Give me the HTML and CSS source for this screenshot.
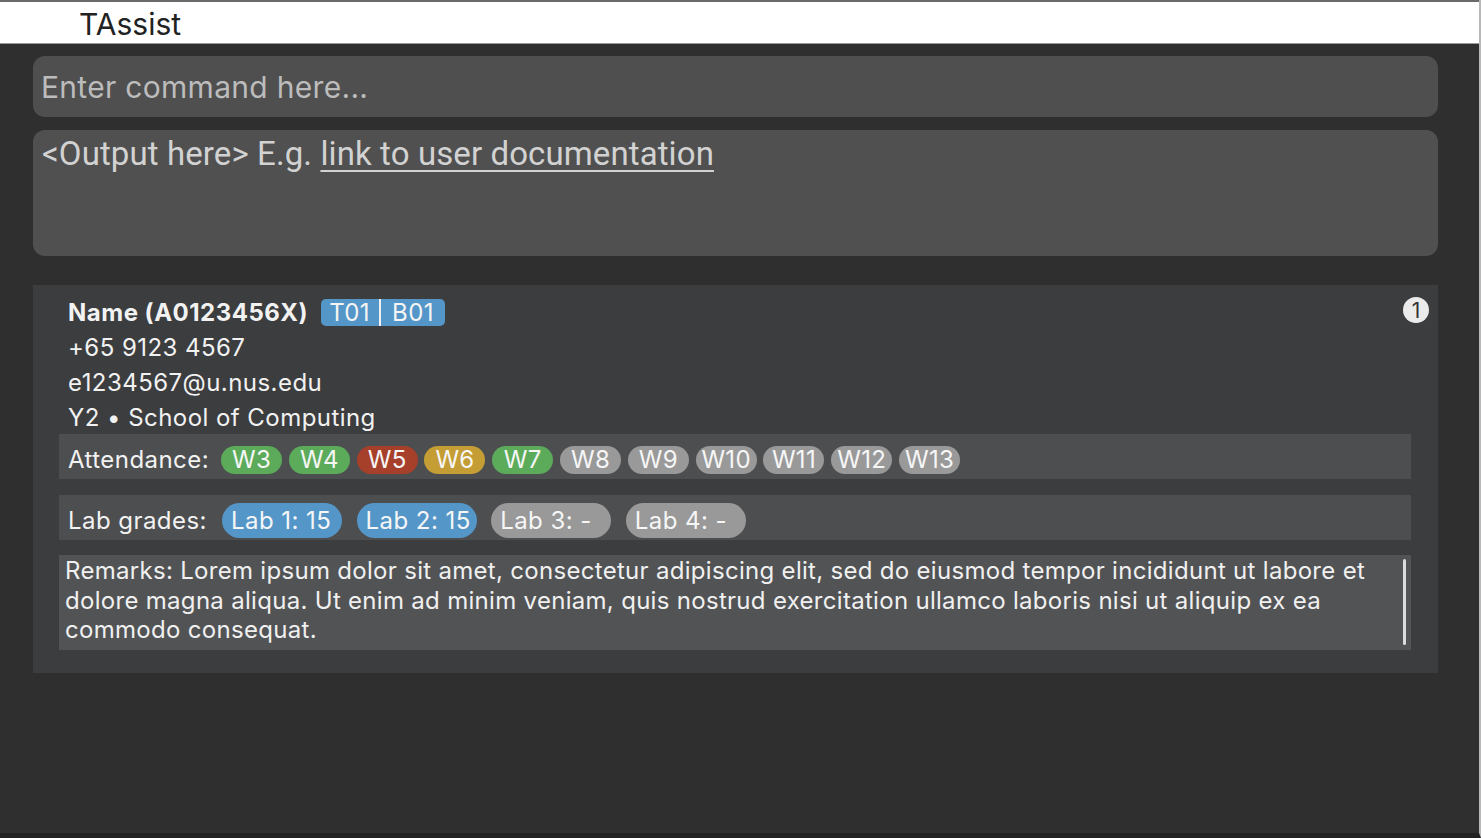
FILE: index.html
```html
<!DOCTYPE html>
<html lang="en">
<head>
<meta charset="utf-8">
<title>TAssist</title>
<link rel="stylesheet" href="styles.css">
</head>
<body>
<div class="window">
  <header class="titlebar"><span class="app-name">TAssist</span></header>
  <main class="content">
    <div class="command">Enter command here...</div>
    <div class="output"><span class="output-text">&lt;Output here&gt; E.g. <span class="link">link to user documentation</span></span></div>
    <section class="card">
      <span class="index">1</span>
      <div class="info">
        <div class="line name-line"><span class="name">Name (A0123456X)</span><span class="group"><span>T01</span><span class="divider"></span><span>B01</span></span></div>
        <div class="line">+65 9123 4567</div>
        <div class="line">e1234567@u.nus.edu</div>
        <div class="line">Y2 • School of Computing</div>
      </div>
      <div class="row attendance">
        <span class="label">Attendance:</span>
        <div class="chips">
          <span class="week present">W3</span>
          <span class="week present">W4</span>
          <span class="week absent">W5</span>
          <span class="week excused">W6</span>
          <span class="week present">W7</span>
          <span class="week pending">W8</span>
          <span class="week pending">W9</span>
          <span class="week pending">W10</span>
          <span class="week pending">W11</span>
          <span class="week pending">W12</span>
          <span class="week pending">W13</span>
        </div>
      </div>
      <div class="row labs">
        <span class="label">Lab grades:</span>
        <div class="lab-chips">
          <span class="lab graded">Lab 1: 15</span>
          <span class="lab graded">Lab 2: 15</span>
          <span class="lab ungraded">Lab 3: -</span>
          <span class="lab ungraded">Lab 4: -</span>
        </div>
      </div>
      <div class="remarks">Remarks: Lorem ipsum dolor sit amet, consectetur adipiscing elit, sed do eiusmod tempor incididunt ut labore et dolore magna aliqua. Ut enim ad minim veniam, quis nostrud exercitation ullamco laboris nisi ut aliquip ex ea commodo consequat.</div>
    </section>
  </main>
</div>
</body>
</html>
```

FILE: styles.css
```css
* { box-sizing: border-box; }
html, body { margin: 0; padding: 0; }
body {
  width: 1481px;
  height: 838px;
  overflow: hidden;
  background: #2f2f2f;
  font-family: Inter, "Noto Sans", sans-serif;
}
.window {
  width: 1481px;
  height: 838px;
  display: flex;
  flex-direction: column;
  background: #2f2f2f;
  border-right: 2px solid #b8b8b8;
  border-bottom: 5px solid #222222;
}
.titlebar {
  height: 44px;
  flex: none;
  background: #ffffff;
  border-top: 2px solid #6a6a6a;
  border-bottom: 1px solid #9a9a9a;
  display: flex;
  align-items: center;
  padding: 2px 0 0 79px;
}
.app-name {
  font-size: 30px;
  color: #222222;
  line-height: 1;
}
.content {
  flex: 1;
  display: flex;
  flex-direction: column;
  padding: 12px 41px 0 33px;
}
.command {
  height: 61px;
  border-radius: 12px;
  background: #4f4f4f;
  color: #bcbcbc;
  font-size: 30px;
  letter-spacing: 0.3px;
  display: flex;
  align-items: center;
  padding-left: 8px;
}
.output {
  margin-top: 13px;
  height: 126px;
  border-radius: 12px;
  background: #505050;
  padding: 4px 0 0 9px;
}
.output-text {
  display: inline-block;
  font-family: Roboto, "Liberation Sans", sans-serif;
  font-size: 33px;
  letter-spacing: 0.1px;
  color: #d2d2d2;
  white-space: nowrap;
}
.link {
  text-decoration: underline;
  text-decoration-thickness: 2px;
  text-underline-offset: 5px;
}
.card {
  position: relative;
  margin-top: 29px;
  background: #3c3d3f;
  padding: 10px 27px 23px 26px;
  color: #f2f2f2;
  font-size: 24px;
  letter-spacing: 0.45px;
}
.index {
  position: absolute;
  top: 12px;
  right: 9px;
  width: 26px;
  height: 26px;
  border-radius: 50%;
  background: #ebebeb;
  color: #333333;
  font-size: 21px;
  letter-spacing: 0;
  display: flex;
  align-items: center;
  justify-content: center;
  line-height: 1;
}
.info {
  padding-left: 9px;
}
.line {
  height: 35px;
  display: flex;
  align-items: center;
}
.name {
  font-weight: 700;
  letter-spacing: 0.5px;
}
.group {
  margin-left: 13px;
  height: 27px;
  background: #5596c8;
  border-radius: 5px;
  display: flex;
  align-items: center;
  padding: 0 11px 0 8px;
  color: #f4f4f4;
}
.divider {
  width: 2px;
  align-self: stretch;
  background: #f0f0f0;
  margin: 0 11px 0 9px;
}
.row {
  height: 45px;
  background: #4d4e50;
  display: flex;
  align-items: center;
  padding: 6px 0 0 9px;
}
.attendance { margin-top: -1px; }
.labs { margin-top: 16px; }
.chips {
  display: flex;
  gap: 6.8px;
  margin-left: 12px;
}
.week {
  width: 61px;
  height: 28px;
  border-radius: 14px;
  display: flex;
  align-items: center;
  justify-content: center;
  color: #f6f6f6;
  line-height: 1;
  letter-spacing: 0.3px;
}
.present { background: #5bab5b; }
.absent { background: #a6402b; }
.excused { background: #c49d34; }
.pending { background: #999999; }
.lab-chips {
  display: flex;
  gap: 14.6px;
  margin-left: 15px;
}
.lab {
  width: 120px;
  height: 35px;
  border-radius: 17.5px;
  display: flex;
  align-items: center;
  padding-left: 9px;
  color: #f6f6f6;
}
.graded { background: #5596c8; }
.ungraded { background: #999999; }
.remarks {
  position: relative;
  margin-top: 15px;
  height: 95px;
  background: #525355;
  padding: 1px 14px 0 6px;
  letter-spacing: 0.3px;
  line-height: 29.5px;
  color: #f0f0f0;
}
.remarks::after {
  content: "";
  position: absolute;
  top: 4px;
  bottom: 5px;
  right: 5px;
  width: 3px;
  border-radius: 2px;
  background: #dcdcdc;
}
```
